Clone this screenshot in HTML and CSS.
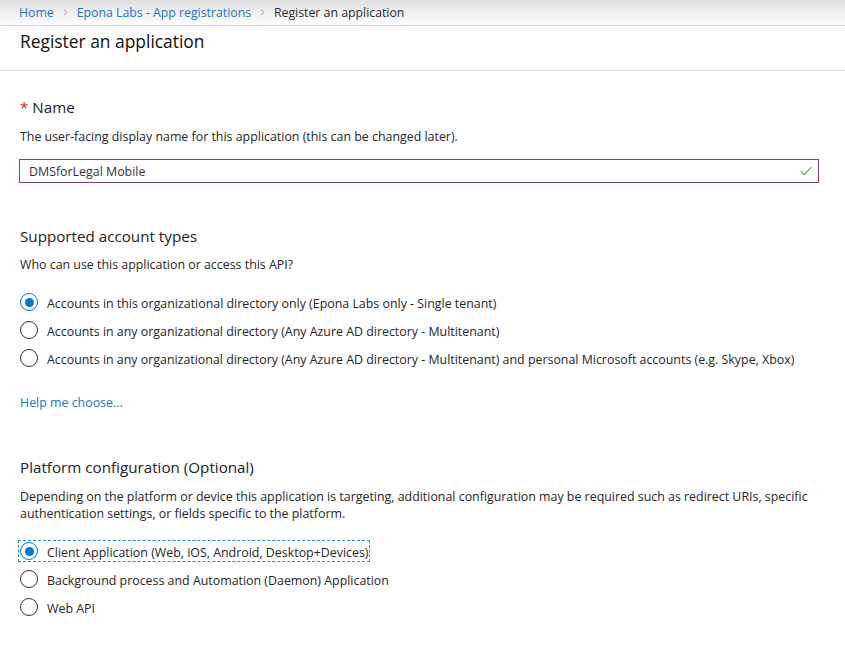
FILE: index.html
```html
<!DOCTYPE html>
<html lang="en">
<head>
<meta charset="utf-8">
<title>Register an application</title>
<link rel="stylesheet" href="styles.css">
</head>
<body>
<nav class="crumbs">
  <a class="crumb-link" href="#">Home</a>
  <span class="chev">&gt;</span>
  <a class="crumb-link" href="#">Epona Labs - App registrations</a>
  <span class="chev">&gt;</span>
  <span class="crumb-current">Register an application</span>
</nav>
<header class="title-bar">
  <h1 class="title">Register an application</h1>
</header>
<main class="form">
  <div class="field-label name-label"><span class="req">*</span> Name</div>
  <p class="desc desc-name">The user-facing display name for this application (this can be changed later).</p>
  <div class="input">
    <span class="input-text">DMSforLegal Mobile</span>
    <svg class="check" width="12" height="10" viewBox="0 0 12 10"><path d="M0.8 5.2 L4.2 8.6 L11.2 1.2" fill="none" stroke="#6aa84f" stroke-width="1.2"/></svg>
  </div>

  <div class="field-label section-label">Supported account types</div>
  <p class="desc desc-who">Who can use this application or access this API?</p>
  <div class="radios radios-1">
    <label class="radio-row"><span class="radio checked"></span><span class="radio-text">Accounts in this organizational directory only (Epona Labs only - Single tenant)</span></label>
    <label class="radio-row"><span class="radio"></span><span class="radio-text">Accounts in any organizational directory (Any Azure AD directory - Multitenant)</span></label>
    <label class="radio-row"><span class="radio"></span><span class="radio-text">Accounts in any organizational directory (Any Azure AD directory - Multitenant) and personal Microsoft accounts (e.g. Skype, Xbox)</span></label>
  </div>
  <a class="help" href="#">Help me choose...</a>

  <div class="field-label platform-label">Platform configuration (Optional)</div>
  <p class="desc desc-platform">Depending on the platform or device this application is targeting, additional configuration may be required such as redirect URIs, specific authentication settings, or fields specific to the platform.</p>
  <div class="radios radios-2">
    <label class="radio-row"><span class="focus"><span class="radio checked"></span><span class="radio-text">Client Application (Web, iOS, Android, Desktop+Devices)</span></span></label>
    <label class="radio-row"><span class="radio"></span><span class="radio-text">Background process and Automation (Daemon) Application</span></label>
    <label class="radio-row"><span class="radio"></span><span class="radio-text">Web API</span></label>
  </div>
</main>
</body>
</html>
```

FILE: styles.css
```css
* { box-sizing: border-box; }
html, body { margin: 0; padding: 0; background: #fff; }
body {
  font-family: "Open Sans", "Noto Sans", sans-serif;
  color: #262626;
  width: 845px;
  height: 645px;
  overflow: hidden;
}
a { text-decoration: none; }

.crumbs {
  height: 26px;
  border-bottom: 1px solid #d6d6d6;
  background: linear-gradient(#dedede 0%, #f4f4f4 60%, #fbfbfb 100%);
  padding-left: 19px;
  padding-top: 1px;
  display: flex;
  align-items: center;
  gap: 8px;
  font-size: 12.3px;
  line-height: 22px;
}
.crumb-link { color: #1a74c4; }
.crumb-current { color: #2b2b2b; }
.chev {
  color: #9a9a9a;
  font-size: 12px;
  transform: scaleX(0.6);
  display: inline-block;
}

.title-bar {
  height: 45px;
  border-bottom: 1px solid #d6d6d6;
  padding: 5px 0 0 20px;
}
.title {
  margin: 0;
  font-size: 17.4px;
  line-height: 20px;
  font-weight: 400;
  color: #111;
}

.form {
  padding: 0 26px 0 19px;
  display: flex;
  flex-direction: column;
  align-items: flex-start;
}
.field-label {
  font-size: 15.2px;
  line-height: 20px;
  color: #222;
  padding-left: 1px;
}
.req { color: #e81123; }
.name-label { margin-top: 26px; }
.section-label { margin-top: 43px; }
.platform-label { margin-top: 46px; }

.desc {
  margin: 0;
  font-size: 12.4px;
  line-height: 17px;
  color: #262626;
  padding-left: 1px;
}
.desc-name { margin-top: 11px; }
.desc-who { margin-top: 10px; }
.desc-platform { margin-top: 11px; }

.input {
  margin-top: 14px;
  width: 800px;
  height: 24px;
  border: 1px solid #7b3f93;
  display: flex;
  align-items: center;
  justify-content: space-between;
  padding: 0 6px 0 9px;
  font-size: 12.4px;
  color: #333;
}
.check { display: block; }

.radios { display: flex; flex-direction: column; }
.radios-1 { margin-top: 15px; }
.radios-2 { margin-top: 15px; }
.radio-row {
  height: 28px;
  display: flex;
  align-items: center;
  font-size: 12.4px;
  color: #262626;
}
.radio-text { position: relative; top: 1px; }
.radio {
  width: 18px;
  height: 18px;
  border: 1px solid #333;
  border-radius: 50%;
  margin-left: 1px;
  margin-right: 9px;
  display: flex;
  align-items: center;
  justify-content: center;
  flex: none;
}
.radio.checked { border-color: #0078d4; }
.radio.checked::after {
  content: "";
  width: 9px;
  height: 9px;
  border-radius: 50%;
  background: #0078d4;
}
.focus {
  display: flex;
  align-items: center;
  outline: 1px dashed #1f8ed6;
  outline-offset: 0;
  height: 20px;
  padding-right: 1px;
}

.help {
  margin-top: 22px;
  font-size: 12.4px;
  line-height: 17px;
  color: #1a74c4;
  padding-left: 1px;
}
```
